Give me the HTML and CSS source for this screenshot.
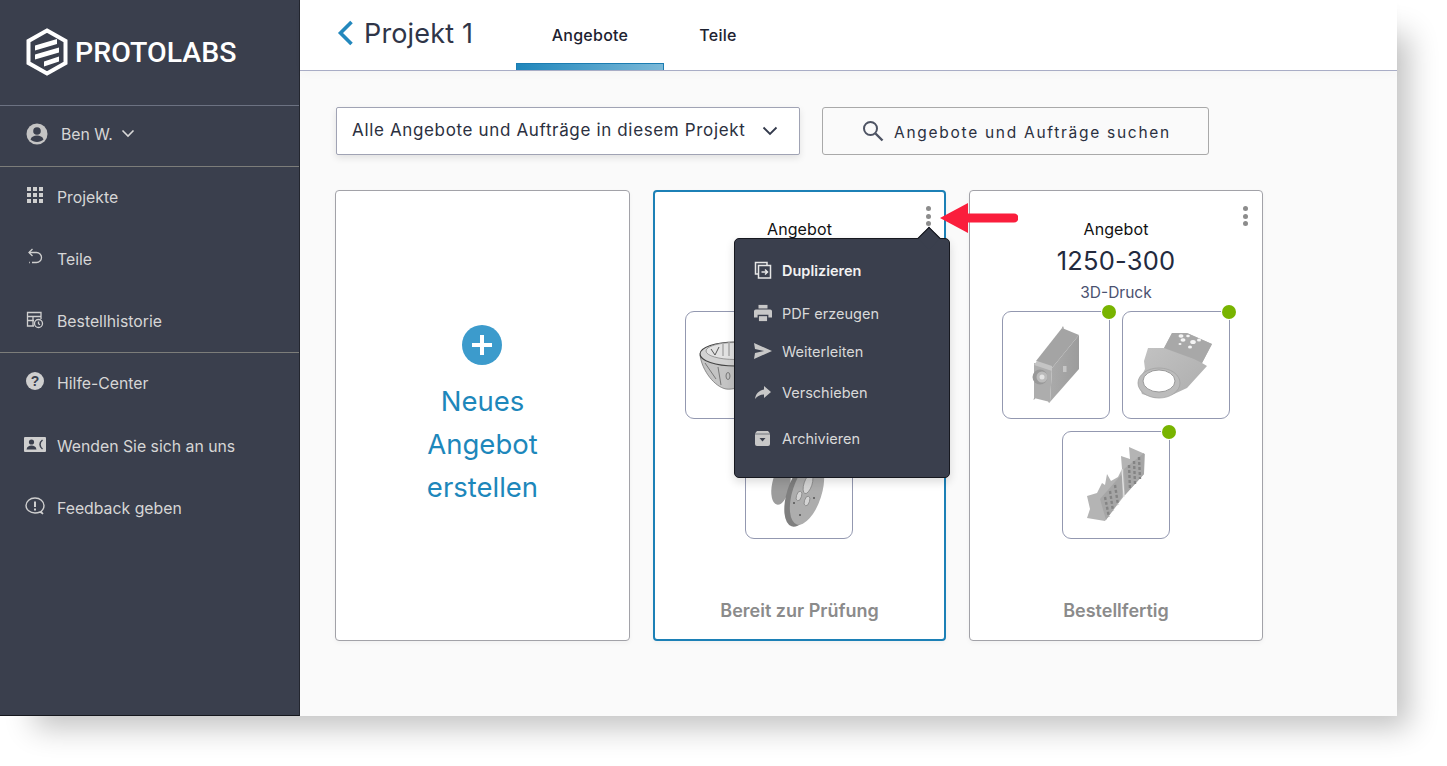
FILE: index.html
```html
<!DOCTYPE html>
<html lang="de">
<head>
<meta charset="utf-8">
<title>Projekt 1</title>
<link rel="stylesheet" href="styles.css">
</head>
<body>
<svg class="defs" width="0" height="0" aria-hidden="true">
  <defs>
    <linearGradient id="gSide" x1="0" y1="0" x2="1" y2="0"><stop offset="0" stop-color="#aaaaaa"/><stop offset="1" stop-color="#9c9c9c"/></linearGradient>
    <linearGradient id="gBody" x1="0" y1="0" x2="1" y2="1"><stop offset="0" stop-color="#c6c6c6"/><stop offset="1" stop-color="#acacac"/></linearGradient>
  </defs>
</svg>
<div class="app">
  <aside class="sidebar">
    <div class="brand">
      <svg class="hex" viewBox="0 0 42 48">
        <path d="M21 2.500 39.500 13v22L21 45.500 2.500 35V13Z" fill="none" stroke="#fff" stroke-width="4"/>
        <path d="M9 17.500 31 11v5L9 22.500ZM9 26.500 33 19.500v5L9 31.500ZM18 33.500 33 28.500v5L18 38.500Z" fill="#fff"/>
      </svg>
      <span class="brand-name">PROTOLABS</span>
    </div>
    <div class="user">
      <svg class="user-icon" viewBox="0 0 22 22">
        <circle cx="11" cy="11" r="10.500" fill="#c4c4c4"/>
        <circle cx="11" cy="8" r="3.800" fill="#3a3f4d"/>
        <path d="M4.500 16.500c1-3 3.500-4 6.500-4s5.500 1 6.500 4c-1.500 1.500-4 2.500-6.500 2.500s-5-1-6.500-2.500Z" fill="#3a3f4d"/>
      </svg>
      <span class="user-name">Ben W.</span>
      <svg class="user-caret" viewBox="0 0 14 9"><path d="M1.500 1.500 7 7l5.500-5.500" fill="none" stroke="#d8d8d8" stroke-width="1.600"/></svg>
    </div>
    <nav class="nav nav-first">
      <a class="nav-item">
        <span class="nav-slot"><svg class="ic-grid" viewBox="0 0 16 16" fill="#cfcfcf"><rect x="0" y="0" width="4" height="4"/><rect x="6" y="0" width="4" height="4"/><rect x="12" y="0" width="4" height="4"/><rect x="0" y="6" width="4" height="4"/><rect x="6" y="6" width="4" height="4"/><rect x="12" y="6" width="4" height="4"/><rect x="0" y="12" width="4" height="4"/><rect x="6" y="12" width="4" height="4"/><rect x="12" y="12" width="4" height="4"/></svg></span>
        <span>Projekte</span>
      </a>
      <a class="nav-item">
        <span class="nav-slot"><svg class="ic" viewBox="0 0 18 18" fill="none" stroke="#cfcfcf" stroke-width="1.300"><path d="M6.500 1 3 4.500 6.500 8"/><path d="M3 4.500h7.500a5 5 0 0 1 0 10H6"/><path d="M3 14.500h.8" stroke-dasharray="1 1"/></svg></span>
        <span>Teile</span>
      </a>
      <a class="nav-item">
        <span class="nav-slot"><svg class="ic" viewBox="0 0 18 18" fill="none" stroke="#cfcfcf" stroke-width="1.300"><path d="M8 15H1.500V1.500h13.500V8"/><path d="M1.500 5.500H15M1.500 9.500H8M7 5.500V15"/><circle cx="12.500" cy="12.500" r="4" fill="#3a3f4d"/><path d="M12.500 10.500v2.200l1.500 1"/></svg></span>
        <span>Bestellhistorie</span>
      </a>
    </nav>
    <nav class="nav nav-second">
      <a class="nav-item">
        <span class="nav-slot"><svg class="ic" viewBox="0 0 18 18"><circle cx="9" cy="9" r="9" fill="#cfcfcf"/><text class="ic-q" x="9" y="13.500" text-anchor="middle">?</text></svg></span>
        <span>Hilfe-Center</span>
      </a>
      <a class="nav-item">
        <span class="nav-slot"><svg class="ic-wide" viewBox="0 0 22 15"><rect width="22" height="15" rx="1" fill="#cfcfcf"/><circle cx="7.500" cy="5" r="2.600" fill="#3a3f4d"/><path d="M2.500 12.500c.5-3 2.500-4 5-4s4.500 1 5 4Z" fill="#3a3f4d"/><path d="M18.500 3c-2 1.500-2.500 2.500-2.500 4.500s.5 3 2.500 4.500" fill="none" stroke="#3a3f4d" stroke-width="1.500"/></svg></span>
        <span>Wenden Sie sich an uns</span>
      </a>
      <a class="nav-item">
        <span class="nav-slot"><svg class="ic-fb" viewBox="0 0 20 18" fill="none" stroke="#cfcfcf" stroke-width="1.400"><path d="M16 14.500c2-1.500 3-3.500 3-6C19 4.300 15 1 10 1S1 4.300 1 8.500 5 16 10 16c2 0 3.500-.3 5-1l3 2Z"/><path d="M10 4.500V10" stroke-width="2"/><path d="M10 11.500v2" stroke-width="2"/></svg></span>
        <span>Feedback geben</span>
      </a>
    </nav>
  </aside>

  <main class="main">
    <header class="topbar">
      <div class="title">
        <svg class="back" viewBox="0 0 17 26"><path d="M14.500 2 3.500 13l11 11" fill="none" stroke="#2388bd" stroke-width="3.600"/></svg>
        <h1 class="title-text">Projekt 1</h1>
      </div>
      <div class="tabs">
        <a class="tab tab-active">Angebote</a>
        <a class="tab tab-plain">Teile</a>
      </div>
    </header>

    <section class="content">
      <div class="toolbar">
        <div class="select">
          <span>Alle Angebote und Aufträge in diesem Projekt</span>
          <svg class="select-caret" viewBox="0 0 16 10"><path d="M1.500 1.500 8 8l6.500-6.500" fill="none" stroke="#333a4c" stroke-width="1.800"/></svg>
        </div>
        <div class="search">
          <svg class="search-icon" viewBox="0 0 22 22" fill="none" stroke="#4d5363" stroke-width="2"><circle cx="8.500" cy="8.500" r="6.500"/><path d="M13.500 13.500 20.500 20.500" stroke-width="2.400"/></svg>
          <span>Angebote und Aufträge suchen</span>
        </div>
      </div>

      <div class="cards">
        <article class="card card-new">
          <svg class="plus" viewBox="0 0 40 40"><circle cx="20" cy="20" r="20" fill="#3c9bcc"/><path d="M20 10v20M10 20h20" stroke="#fff" stroke-width="4"/></svg>
          <p class="new-label">Neues<br>Angebot<br>erstellen</p>
        </article>

        <article class="card card-quote card-selected">
          <div class="kebab"><i></i><i></i><i></i></div>
          <p class="q-label">Angebot</p>
          <div class="q-hidden"></div>
          <div class="thumbs">
            <div class="thumb">
              <svg viewBox="1 1 106 106">
                <path d="M15 44C17 60 30 76 41 78 56 80 72 66 78 46Z" fill="#c4c4c4" stroke="#666" stroke-width=".7"/>
                <ellipse cx="50" cy="43" rx="35" ry="12" fill="#d2d2d2" stroke="#444" stroke-width="1.200"/>
                <ellipse cx="50" cy="40" rx="29" ry="8.500" fill="#e2e2e2" stroke="#888" stroke-width=".8"/>
                <path d="M20 52 31 68M33 56 36 74" stroke="#777" stroke-width="1"/>
                <path d="M26 38 30 44 34 36" fill="none" stroke="#555"/>
                <ellipse cx="43" cy="65" rx="2" ry="3.500" fill="none" stroke="#777"/>
                <path d="M38 32v13M44 31v14" stroke="#aaa" stroke-width="1.500"/>
              </svg>
            </div>
            <div class="thumb"></div>
            <div class="thumb">
              <svg viewBox="1 1 106 106">
                <ellipse cx="36" cy="54" rx="9" ry="20" fill="#9c9c9c" transform="rotate(12 36 54)"/>
                <ellipse cx="57" cy="63" rx="15" ry="34" fill="#7f7f7f" transform="rotate(18 57 63)"/>
                <ellipse cx="62" cy="62" rx="14.500" ry="33" fill="#adadad" transform="rotate(18 62 62)"/>
                <ellipse cx="63" cy="53" rx="4" ry="10" fill="#d4d4d4" stroke="#808080" stroke-width=".7" transform="rotate(18 63 53)"/>
                <ellipse cx="54" cy="65" rx="2.500" ry="5" fill="#d4d4d4" stroke="#808080" stroke-width=".7" transform="rotate(18 54 65)"/>
                <ellipse cx="62" cy="70" rx="2.500" ry="5" fill="#d4d4d4" stroke="#808080" stroke-width=".7" transform="rotate(18 62 70)"/>
                <circle cx="49" cy="72" r="1" fill="#555"/>
                <circle cx="69" cy="67" r="1" fill="#555"/>
                <circle cx="55" cy="84" r="1" fill="#555"/>
              </svg>
            </div>
          </div>
          <p class="status">Bereit zur Prüfung</p>
          <div class="menu">
            <div class="menu-item menu-item-strong">
              <svg class="m-ic" viewBox="0 0 18 18" fill="none" stroke="#e6e6e6" stroke-width="1.500"><path d="M4 13H1.500V1.500H13V4"/><rect x="4.500" y="4.500" width="12" height="12.500"/><path d="M7.500 11h5.500M11 8.500l2.500 2.500-2.500 2.500"/></svg>
              <span>Duplizieren</span>
            </div>
            <div class="menu-item menu-pdf">
              <svg class="m-ic" viewBox="0 0 20 18"><path d="M5 0h10v4H5Z" fill="#c8c8c8"/><path d="M2 5h16a2 2 0 0 1 2 2v7h-4v-3H4v3H0V7a2 2 0 0 1 2-2Z" fill="#c8c8c8"/><path d="M5.500 12.500h9V18h-9Z" fill="#c8c8c8"/></svg>
              <span>PDF erzeugen</span>
            </div>
            <div class="menu-item">
              <svg class="m-ic" viewBox="0 0 18 16"><path d="M0 0 18 8 0 16l1-6 9-2-9-2Z" fill="#c8c8c8"/></svg>
              <span>Weiterleiten</span>
            </div>
            <div class="menu-item menu-move">
              <svg class="m-ic m-ic-small" viewBox="0 0 16 13"><path d="M9 0l7 6-7 6V8.500C5 8.500 2.500 10 0 13c.7-5 3.500-8.500 9-9.500Z" fill="#c8c8c8"/></svg>
              <span>Verschieben</span>
            </div>
            <div class="menu-item menu-archive">
              <svg class="m-ic m-ic-arch" viewBox="0 0 15 15"><path d="M2 0h11l2 2.500V13a2 2 0 0 1-2 2H2a2 2 0 0 1-2-2V2.500Z" fill="#c8c8c8"/><path d="M0 3h15" stroke="#3a3f4d" stroke-width=".6"/><path d="M4.500 7h6l-3 3.500Z" fill="#3a3f4d"/></svg>
              <span>Archivieren</span>
            </div>
          </div>
          <svg class="red-arrow" viewBox="0 0 78 30"><path d="M0 15 28 0V10.500H74a4.500 4.500 0 0 1 0 9H28V30Z" fill="#fa1e3c"/></svg>
        </article>

        <article class="card card-quote card-last">
          <div class="kebab"><i></i><i></i><i></i></div>
          <p class="q-label">Angebot</p>
          <p class="q-number">1250-300</p>
          <p class="q-type">3D-Druck</p>
          <div class="thumbs">
            <div class="thumb thumb-ok">
              <svg viewBox="1 1 106 106">
                <path d="M34 50 60 17 77 24 50 57Z" fill="#a4a4a4"/>
                <path d="M50 57 77 24V58L48 91Z" fill="url(#gSide)"/>
                <path d="M32 52 50 57 48 91 32 87Z" fill="#adadad"/>
                <path d="M35 50 50 55V60L32 54Z" fill="#c4c4c4"/>
                <path d="M60 17l1-2 1 3ZM48 91l-1 1-1-2ZM32 87l-.5 2 2-1.500Z" fill="#999"/>
                <circle cx="38" cy="66" r="7.500" fill="#999"/><circle cx="40" cy="66" r="5.500" fill="#bbb"/><circle cx="40" cy="66" r="2.500" fill="#e4e4e4"/>
                <rect x="61" y="55" width="3.500" height="6" fill="#c6c6c6"/>
              </svg>
            </div>
            <div class="thumb thumb-ok">
              <svg viewBox="1 1 106 106">
                <path d="M22 50 26 37 42 37 50 22 65 22 90 33 80 52 85 55 65 77 52 83 33 87 20 83 16 72 23 58Z" fill="url(#gBody)"/>
                <path d="M42 37 50 22 65 22 90 33 80 52 72 48Z" fill="#a8a8a8"/>
                <ellipse cx="37" cy="72" rx="21" ry="15" fill="#bcbcbc" stroke="#a2a2a2" stroke-width=".8"/>
                <ellipse cx="37" cy="70" rx="16" ry="11" fill="#fff" stroke="#999"/>
                <g fill="#f4f4f4"><ellipse cx="59" cy="25" rx="2.500" ry="1.800"/><ellipse cx="66" cy="25" rx="1.800" ry="1.300"/><ellipse cx="77" cy="29" rx="2" ry="1.500"/><ellipse cx="61" cy="29" rx="2.500" ry="1.800"/><ellipse cx="71" cy="31" rx="2.800" ry="2"/><ellipse cx="58" cy="33" rx="1.500" ry="1"/><ellipse cx="68" cy="36" rx="2" ry="1.500"/></g>
              </svg>
            </div>
            <div class="thumb thumb-ok">
              <svg viewBox="1 1 106 106">
                <path d="M25 65 35 62 40 52 43 54 45 43 49 50 56 46 60 38 59 25 68 28 67 16 83 23 82 43 62 65 43 90 25 87 28 78Z" fill="#b4b4b4"/>
                <path d="M38 68 60 43V66L44 89Z" fill="#a6a6a6"/>
                <path d="M62 38 82 22V43L63 64Z" fill="#a6a6a6"/>
                <path d="M60 38 62 66" stroke="#e6e6e6" stroke-width="1.200"/>
                <path d="M43 66 47 86M48 60 51 80M53 54 56 74M67 34 68 58M72 30 73 53M77 26 78 48" stroke="#848484" stroke-width="2.400" stroke-dasharray="3 2"/>
              </svg>
            </div>
          </div>
          <p class="status">Bestellfertig</p>
        </article>
      </div>
    </section>
  </main>
</div>
</body>
</html>
```

FILE: styles.css
```css
* { box-sizing: border-box; }
html, body { margin: 0; padding: 0; background: #fff; overflow: hidden; height: 766px; }
body { font-family: "Inter", "Liberation Sans", sans-serif; }
p, h1 { margin: 0; font-weight: 400; }
.defs { position: absolute; }

.app {
  width: 1397px;
  height: 716px;
  display: flex;
  background: #fafafa;
  box-shadow: 23px 23px 28px -11px rgba(0, 0, 0, .24);
}

/* Sidebar */
.sidebar {
  width: 300px;
  flex: none;
  background: #3a3f4d;
  border-right: 1px solid #23262f;
  border-bottom: 1px solid #15171d;
  color: #d6d6d6;
  font-size: 15.800px;
  display: flex;
  flex-direction: column;
}
.brand {
  height: 106px;
  padding: 28px 0 0 26px;
  display: flex;
  align-items: flex-start;
  border-bottom: 1px solid #6c7282;
}
.hex { width: 42px; height: 48px; flex: none; }
.brand-name {
  margin: 6px 0 0 7px;
  color: #fff;
  font-family: "Roboto", "Liberation Sans", sans-serif;
  font-weight: 500;
  font-size: 28.500px;
  line-height: 38px;
}
.user {
  height: 61px;
  padding: 0 0 4px 26px;
  display: flex;
  align-items: center;
  border-bottom: 1px solid #7c7d7a;
}
.user-icon { width: 22px; height: 22px; margin-right: 13px; }
.user-name { margin-right: 8px; }
.user-caret { width: 14px; height: 9px; margin-top: -2px; }
.nav-first { border-bottom: 1px solid #7c7d7a; }
.nav { display: flex; flex-direction: column; }
.nav-item {
  height: 62px;
  padding-bottom: 2px;
  display: flex;
  align-items: center;
}
.nav-first .nav-item:last-child { height: 61px; padding-bottom: 0; }
.nav-second .nav-item:not(:first-child) { padding-bottom: 0; }
.nav-slot {
  width: 57px;
  padding-left: 24px;
  flex: none;
  display: flex;
  align-items: center;
  margin-top: -4px;
}
.ic { width: 18px; height: 18px; margin-left: 2px; }
.ic-grid { width: 16px; height: 16px; margin-left: 3px; }
.ic-q { font: 700 14px "Liberation Sans", sans-serif; fill: #3a3f4d; }
.ic-wide { width: 22px; height: 15px; }
.ic-fb { width: 20px; height: 18px; margin-left: 1px; }

/* Main */
.main { flex: 1; display: flex; flex-direction: column; min-width: 0; }
.topbar {
  height: 71px;
  flex: none;
  background: #fff;
  border-bottom: 1px solid #a9adc6;
  display: flex;
  padding-left: 37px;
  box-shadow: 0 4px 8px rgba(0, 0, 0, .02);
}
.title { width: 179px; display: flex; align-items: center; padding-bottom: 2px; flex: none; }
.back { width: 17px; height: 26px; margin: -2px 10px 0 0; }
.title-text { font-size: 27px; color: #2f3548; letter-spacing: .15px; line-height: 36px; white-space: nowrap; }
.tabs { display: flex; }
.tab {
  height: 70px;
  font-size: 16px;
  font-weight: 500;
  letter-spacing: .25px;
  color: #1d2230;
  display: flex;
  align-items: center;
  justify-content: center;
  padding-bottom: 1px;
}
.tab-active {
  width: 148px;
  position: relative;
}
.tab-active::after {
  content: "";
  position: absolute;
  left: 0;
  right: 0;
  bottom: 0;
  height: 6px;
  background: linear-gradient(90deg, #1f86bb, #7cb9d8);
  border: 1px solid #1b7db2;
  border-bottom: 0;
}
.tab-plain { width: 108px; }

.content { flex: 1; padding: 36px 0 0 35px; }
.toolbar { display: flex; gap: 22px; margin-left: 1px; }
.select {
  width: 464px;
  height: 48px;
  background: #fff;
  border: 1px solid #a0a3b4;
  border-radius: 2px;
  box-shadow: 0 3px 7px rgba(0, 0, 0, .1);
  display: flex;
  align-items: center;
  justify-content: space-between;
  padding: 0 21px 2px 15px;
  font-size: 17px;
  color: #2b3040;
  letter-spacing: .65px;
  white-space: nowrap;
}
.select-caret { width: 16px; height: 10px; margin-top: 2px; }
.search {
  width: 387px;
  height: 48px;
  border: 1px solid #a9a9a9;
  border-radius: 3px;
  display: flex;
  align-items: center;
  padding: 2px 0 0 39px;
  font-size: 15.500px;
  letter-spacing: 1.720px;
  color: #2b3040;
  white-space: nowrap;
}
.search-icon { width: 22px; height: 22px; margin: -3px 10px 0 0; }

.cards { display: flex; gap: 23px; margin-top: 35px; }
.card {
  width: 294px;
  height: 451px;
  background: #fff;
  border: 1px solid #a2a2a8;
  border-radius: 4px;
  position: relative;
  box-shadow: 0 2px 5px rgba(0, 0, 0, .04);
}
.card-new {
  width: 295px;
  display: flex;
  flex-direction: column;
  align-items: center;
  padding-top: 134px;
}
.plus { width: 40px; height: 40px; margin-right: 1px; }
.new-label {
  margin-top: 15px;
  color: #1d87bb;
  font-size: 27.500px;
  line-height: 43px;
  text-align: center;
}
.card-quote {
  display: flex;
  flex-direction: column;
  align-items: center;
  padding: 27px 0 17px;
}
.card-selected {
  width: 293px;
  border: 2px solid #1c80b6;
  padding-top: 26px;
  padding-bottom: 16px;
}
.q-label { font-size: 16px; color: #111; line-height: 22px; letter-spacing: .1px; }
.q-number { font-size: 25.500px; color: #232a3e; line-height: 36px; margin-top: 3px; letter-spacing: .2px; }
.q-type { font-size: 15.500px; color: #4b5270; line-height: 22px; margin-top: 3px; }
.q-hidden { height: 64px; flex: none; }
.thumbs {
  width: 228px;
  margin-top: 7px;
  display: flex;
  flex-wrap: wrap;
  justify-content: center;
  gap: 12px;
}
.card-selected .thumbs { margin-left: -2px; }
.thumb {
  width: 108px;
  height: 108px;
  border: 1px solid #9398b0;
  border-radius: 9px;
  background: #fff;
  position: relative;
}
.thumb svg { width: 106px; height: 106px; display: block; }
.thumb-ok::after {
  content: "";
  position: absolute;
  right: -7px;
  top: -7px;
  width: 14px;
  height: 14px;
  border-radius: 50%;
  background: #78b400;
  box-shadow: 0 0 0 1px #fff;
}
.status {
  margin-top: auto;
  color: #8b8b8b;
  font-size: 18px;
  font-weight: 600;
  line-height: 24px;
}
.kebab {
  position: absolute;
  right: 14px;
  top: 15px;
  display: flex;
  flex-direction: column;
  gap: 2.500px;
}
.kebab i { width: 5px; height: 5px; border-radius: 50%; background: #8c8c8c; }
.card-selected .kebab { right: 13px; top: 14px; }

/* Popup menu */
.menu {
  position: absolute;
  left: 79px;
  top: 46px;
  width: 216px;
  height: 240px;
  background: #3a3f4d;
  border: 1px solid #16181f;
  border-radius: 5px;
  box-shadow: 0 4px 10px rgba(0, 0, 0, .14);
  padding-top: 12px;
  color: #d9d9d9;
  font-size: 14.500px;
}
.menu::before {
  content: "";
  position: absolute;
  right: 12px;
  top: -9px;
  width: 15px;
  height: 15px;
  background: #3a3f4d;
  transform: rotate(45deg);
  border-left: 1px solid #16181f;
  border-top: 1px solid #16181f;
}
.menu-item { height: 38px; display: flex; align-items: center; position: relative; padding-left: 19px; }
.m-ic { width: 18px; height: 18px; margin-right: 10px; flex: none; }
.m-ic-small { width: 16px; height: 13px; margin: 0 11px 0 1px; }
.m-ic-arch { width: 15px; height: 15px; margin: 0 12px 0 1px; }
.menu-item-strong { color: #f2f2f2; font-weight: 600; }
.menu-pdf { margin-top: 5px; }
.menu-move { margin-top: 3px; }
.menu-archive { margin-top: 8px; }

.red-arrow {
  position: absolute;
  left: 285px;
  top: 11px;
  width: 78px;
  height: 30px;
  z-index: 3;
}
```
